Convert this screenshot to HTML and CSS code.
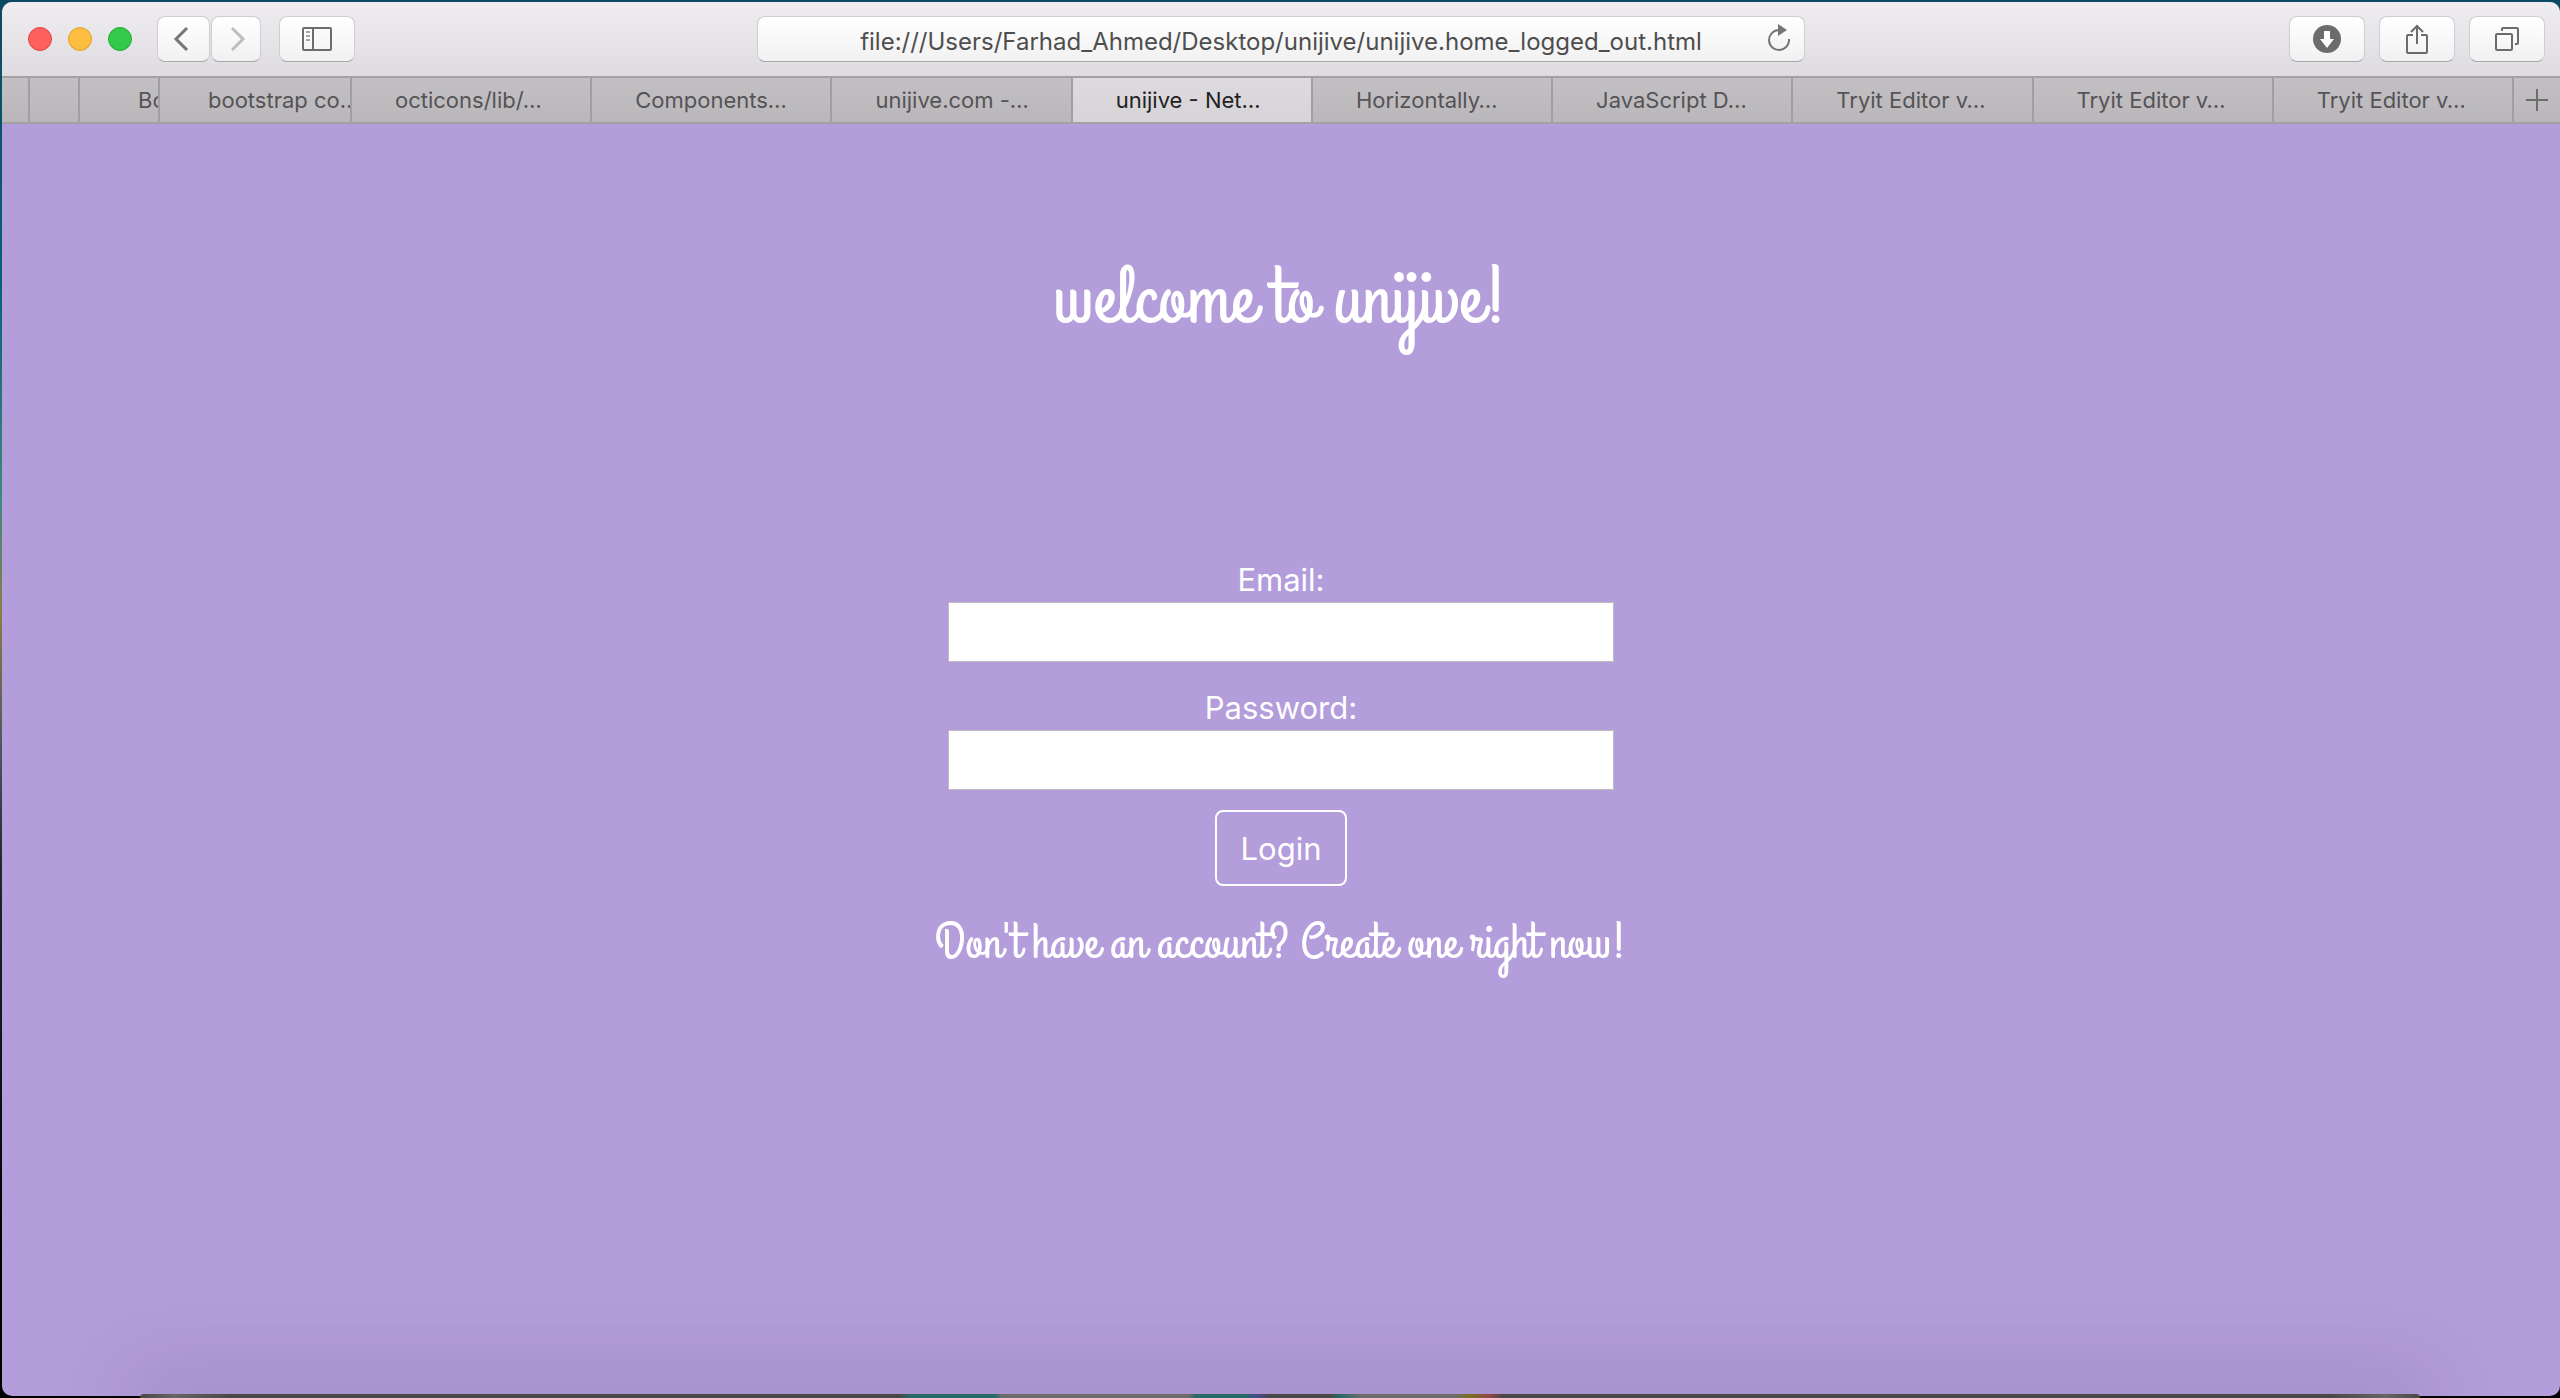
FILE: index.html
```html
<!DOCTYPE html>
<html lang="en">
<head>
<meta charset="utf-8">
<title>unijive - Network</title>
<link rel="stylesheet" href="styles.css">
</head>
<body>
<div class="window">
  <header class="toolbar">
    <div class="tools">
      <div class="lights">
        <button class="light red" aria-label="Close"></button>
        <button class="light amber" aria-label="Minimize"></button>
        <button class="light green" aria-label="Full screen"></button>
      </div>
      <div class="history">
        <button class="tool back" aria-label="Back"><svg width="16" height="26" viewBox="0 0 16 26"><path d="M14 2 3 13l11 11" fill="none" stroke="#757575" stroke-width="3"/></svg></button>
        <button class="tool forward" aria-label="Forward"><svg width="16" height="26" viewBox="0 0 16 26"><path d="m2 2 11 11L2 24" fill="none" stroke="#bdbdbd" stroke-width="3"/></svg></button>
      </div>
      <button class="tool" aria-label="Show sidebar"><svg width="30" height="24" viewBox="0 0 30 24"><g fill="none" stroke="#6c6c6c" stroke-width="2"><rect x="1" y="1" width="28" height="22" rx="1"/><path d="M11 1v22"/></g><path d="M4 5h4M4 9h4M4 13h4" stroke="#a5a5a5" stroke-width="2"/></svg></button>
    </div>
    <div class="address">
      <input class="url" type="text" aria-label="Address" value="file:///Users/Farhad_Ahmed/Desktop/unijive/unijive.home_logged_out.html">
      <button class="reload" aria-label="Reload"><svg width="24" height="28" viewBox="0 0 24 28"><path d="M12 6A10 10 0 1 0 22 15" fill="none" stroke="#757575" stroke-width="2"/><path d="M11 0v12l9-6z" fill="#757575"/></svg></button>
    </div>
    <div class="tools end">
      <button class="tool" aria-label="Downloads"><svg width="28" height="28" viewBox="0 0 28 28"><circle cx="14" cy="14" r="14" fill="#6c6c6c"/><path d="M11 6h6v8h4l-7 9-7-9h4z" fill="#fff"/></svg></button>
      <button class="tool" aria-label="Share"><svg width="24" height="30" viewBox="0 0 24 30"><path d="M8 11H3q-1 0-1 1v16q0 1 1 1h18q1 0 1-1V12q0-1-1-1h-5M12 20V2M6 8l6-6 6 6" fill="none" stroke="#6c6c6c" stroke-width="2"/></svg></button>
      <button class="tool" aria-label="Show all tabs"><svg width="24" height="24" viewBox="0 0 24 24"><path d="M7 4V2q0-1 1-1h14q1 0 1 1v14q0 1-1 1h-2" fill="none" stroke="#6c6c6c" stroke-width="2"/><rect x="1" y="7" width="16" height="16" rx="1" fill="none" stroke="#6c6c6c" stroke-width="2"/></svg></button>
    </div>
  </header>
  <nav class="tabs" aria-label="Tabs">
    <button class="tab stack-a" aria-label="Pinned tab"></button>
    <button class="tab stack-b" aria-label="Pinned tab"></button>
    <button class="tab stack-c">Bo</button>
    <button class="tab stack-d">bootstrap co…</button>
    <button class="tab">octicons/lib/…</button>
    <button class="tab">Components…</button>
    <button class="tab">unijive.com -…</button>
    <button class="tab active">unijive - Net…</button>
    <button class="tab">Horizontally…</button>
    <button class="tab">JavaScript D…</button>
    <button class="tab">Tryit Editor v…</button>
    <button class="tab">Tryit Editor v…</button>
    <button class="tab">Tryit Editor v…</button>
    <button class="new-tab" aria-label="New tab"><svg width="22" height="22" viewBox="0 0 22 22"><path d="M11 0v22M0 11h22" stroke="#6c6c6c" stroke-width="2"/></svg></button>
  </nav>
  <main class="page">
    <h1 class="welcome">welcome to unijive!</h1>
    <form class="login">
      <label class="label" for="email">Email:</label>
      <input class="field" id="email" type="email">
      <label class="label" for="password">Password:</label>
      <input class="field" id="password" type="password">
      <button class="submit" type="button">Login</button>
    </form>
    <a class="signup" href="#">Don't have an account? Create one right now!</a>
  </main>
</div>
<div class="dock"></div>
</body>
</html>
```
FILE: styles.css
```css
* { box-sizing: border-box; }

body {
  margin: 0;
  min-height: 100vh;
  position: relative;
  overflow: hidden;
  display: flex;
  padding: 2px 0 2px 2px;
  background: linear-gradient(to bottom, #0a4a60 0, #086078 20%, #3f8a7c 36%, #8a7c48 44%, #4a5560 54%, #20282a 62%, #000 90%);
  font-family: Inter, "Liberation Sans", sans-serif;
}

button, input { font: inherit; margin: 0; }
button { padding: 0; border: 0; background: none; color: inherit; }
svg { display: block; }

.window {
  flex: 1;
  min-width: 0;
  display: flex;
  flex-direction: column;
  border-radius: 10px;
  overflow: hidden;
  background: #b39ddb;
}

.toolbar {
  display: grid;
  grid-template-columns: 1fr 41% 1fr;
  align-items: center;
  height: 76px;
  border-bottom: 2px solid #a3a1a3;
  background: linear-gradient(#efedf0, #dedce0);
}

.tools { display: flex; align-items: center; padding-left: 26px; }
.tools.end { justify-content: flex-end; gap: 14px; padding: 0 15px 0 0; }

.lights { display: flex; gap: 16px; margin-right: 25px; }
.light { width: 24px; height: 24px; border-radius: 50%; border: 1px solid; }
.red { background: #fc615d; border-color: #e04643; }
.amber { background: #fdbd41; border-color: #e0a030; }
.green { background: #34c94a; border-color: #24ab35; }

.history { display: flex; gap: 1px; margin-right: 18px; }

.tool, .url {
  height: 46px;
  border: 1px solid #cfcdd0;
  border-bottom-color: #a9a8aa;
  border-radius: 8px;
  background: linear-gradient(#fff, #f2f1f2);
}
.tool { width: 76px; display: flex; align-items: center; justify-content: center; }
.back { width: 53px; padding-right: 6px; }
.forward { width: 50px; padding-left: 3px; }

.address { position: relative; }
.url {
  display: block;
  width: 100%;
  padding: 4px 50px 0;
  color: #4e4e4e;
  font-size: 24px;
  text-align: center;
}
.reload { position: absolute; right: 14px; top: 8px; }

.tabs {
  display: flex;
  height: 46px;
  border-bottom: 2px solid #a3a1a3;
  background: linear-gradient(#c2c0c3, #b9b7ba);
  color: #555356;
  font-size: 22px;
}
.tab {
  flex: 1;
  min-width: 0;
  padding-left: 43px;
  border-right: 2px solid #a09ea1;
  overflow: hidden;
  white-space: nowrap;
  text-align: left;
}
.stack-a { flex: 0 0 28px; padding: 0; }
.stack-b { flex: 0 0 50px; padding: 0; }
.stack-c { flex: 0 0 80px; padding-left: 58px; }
.stack-d { flex: 0 0 192px; padding-left: 48px; }
.active { background: linear-gradient(#dddbde, #d6d4d7); color: #222; }
.new-tab { flex: 0 0 46px; display: flex; align-items: center; justify-content: center; }

.page {
  flex: 1;
  display: flex;
  flex-direction: column;
  align-items: center;
  padding-top: 126px;
  color: #fff;
}

.welcome, .signup {
  font-family: "Grand Hotel", Lato, cursive;
  font-weight: 400;
}
.welcome { margin: 0 0 208px; font-size: 80px; line-height: 100px; }

.login {
  width: 26%;
  display: flex;
  flex-direction: column;
  align-items: center;
  font-size: 31px;
}
.label { line-height: 44px; }
.field {
  width: 100%;
  height: 60px;
  margin-bottom: 24px;
  padding: 0 12px;
  border: 1px solid #bdbdbd;
  background: #fff;
}
.submit {
  height: 76px;
  margin-top: -4px;
  padding: 0 24px;
  border: 2px solid #fff;
  border-radius: 8px;
}
.signup { margin-top: 32px; font-size: 50px; line-height: 52px; color: #fff; text-decoration: none; }

/* Top edge of the dock, rising over the bottom of the window */
.dock {
  position: absolute;
  left: 140px;
  right: 140px;
  bottom: 0;
  height: 4px;
  border-radius: 4px 4px 0 0;
  background: linear-gradient(to right,
    #484848 0, #666 1.5%, #484848 4%, #484848 33.3%,
    #266b68 33.8%, #266b68 37.5%, #6c6c6c 37.8%, #6c6c6c 46%,
    #266b68 46.3%, #266b68 48.5%, #484a8c 49%, #484848 49.6%, #484848 52.2%,
    #266b68 52.6%, #6c6c6c 53.6%, #6c6c6c 57.6%,
    #777024 58.3%, #944646 59.2%, #484848 59.8%, #484848 96%, #666 98.5%, #484848 100%);
  box-shadow: 0 0 80px 14px rgba(80, 70, 90, .3);
}
```
